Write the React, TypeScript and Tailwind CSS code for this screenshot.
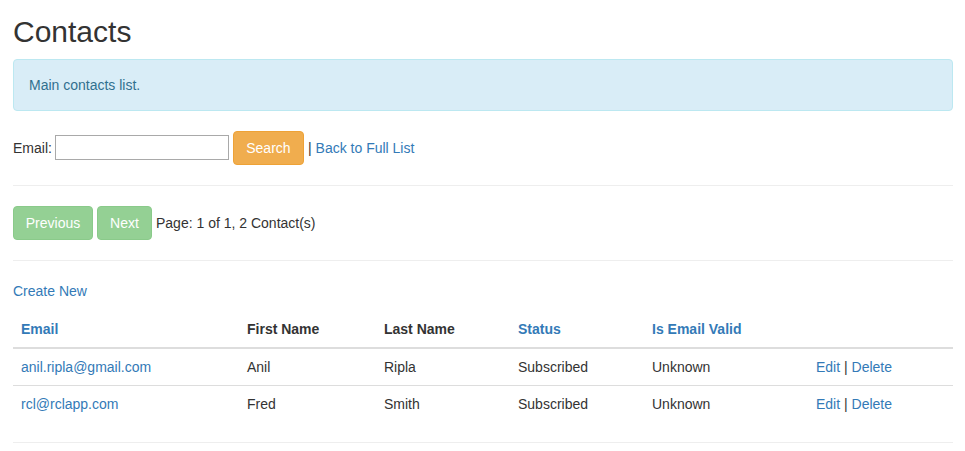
const contacts = [
  { email: "anil.ripla@gmail.com", first: "Anil", last: "Ripla", status: "Subscribed", valid: "Unknown" },
  { email: "rcl@rclapp.com", first: "Fred", last: "Smith", status: "Subscribed", valid: "Unknown" },
];

const link = "text-[#337ab7] hover:underline";

export default function App() {
  return (
    <div className="min-h-screen bg-white px-[13px] text-[14px] leading-[20px] text-[#333] [font-family:'Liberation_Sans',Arial,sans-serif]">
      <h1 className="pt-[15px] pb-[11px] text-[30px] leading-[33px] font-normal">Contacts</h1>

      <div className="w-[940px] rounded-[4px] border border-[#bce8f1] bg-[#d9edf7] p-[15px] text-[#31708f]">
        Main contacts list.
      </div>

      <div className="mt-[20px] flex h-[34px] items-center">
        <label className="mr-[3px]">Email:</label>
        <input type="text" className="mb-[2px] h-[25px] w-[174px] border border-[#a9a9a9] px-1 outline-none" />
        <button className="ml-[4px] h-[34px] w-[71px] rounded-[4px] border border-[#eea236] bg-[#f0ad4e] text-white">
          Search
        </button>
        <span className="ml-[4px]">|</span>
        <a href="#" className={`ml-[4px] ${link}`}>Back to Full List</a>
      </div>

      <hr className="my-[20px] w-[940px] border-t border-[#eee]" />

      <div className="flex h-[34px] items-center">
        <button disabled className="h-[34px] w-[80px] rounded-[4px] border border-[#4cae4c] bg-[#5cb85c] text-white opacity-65">
          Previous
        </button>
        <button disabled className="ml-[4px] h-[34px] w-[55px] rounded-[4px] border border-[#4cae4c] bg-[#5cb85c] text-white opacity-65">
          Next
        </button>
        <span className="ml-[4px]">Page: 1 of 1, 2 Contact(s)</span>
      </div>

      <hr className="my-[20px] w-[940px] border-t border-[#eee]" />

      <div className="mb-[10px]">
        <a href="#" className={link}>Create New</a>
      </div>

      <table className="w-[940px] table-fixed border-collapse">
        <colgroup>
          <col className="w-[226px]" />
          <col className="w-[137px]" />
          <col className="w-[134px]" />
          <col className="w-[134px]" />
          <col className="w-[164px]" />
          <col className="w-[145px]" />
        </colgroup>
        <thead>
          <tr className="border-b-2 border-[#ddd] text-left">
            <th className="p-[8px] font-bold"><a href="#" className="text-[#337ab7]">Email</a></th>
            <th className="p-[8px] font-bold">First Name</th>
            <th className="p-[8px] font-bold">Last Name</th>
            <th className="p-[8px] font-bold"><a href="#" className="text-[#337ab7]">Status</a></th>
            <th className="p-[8px] font-bold"><a href="#" className="text-[#337ab7]">Is Email Valid</a></th>
            <th className="p-[8px]"></th>
          </tr>
        </thead>
        <tbody>
          {contacts.map((c, i) => (
            <tr key={c.email} className={i > 0 ? "border-t border-[#ddd]" : ""}>
              <td className="p-[8px]"><a href="#" className={link}>{c.email}</a></td>
              <td className="p-[8px]">{c.first}</td>
              <td className="p-[8px]">{c.last}</td>
              <td className="p-[8px]">{c.status}</td>
              <td className="p-[8px]">{c.valid}</td>
              <td className="p-[8px]">
                <a href="#" className={link}>Edit</a> | <a href="#" className={link}>Delete</a>
              </td>
            </tr>
          ))}
        </tbody>
      </table>

      <hr className="mt-[20px] w-[940px] border-t border-[#eee]" />
    </div>
  );
}
